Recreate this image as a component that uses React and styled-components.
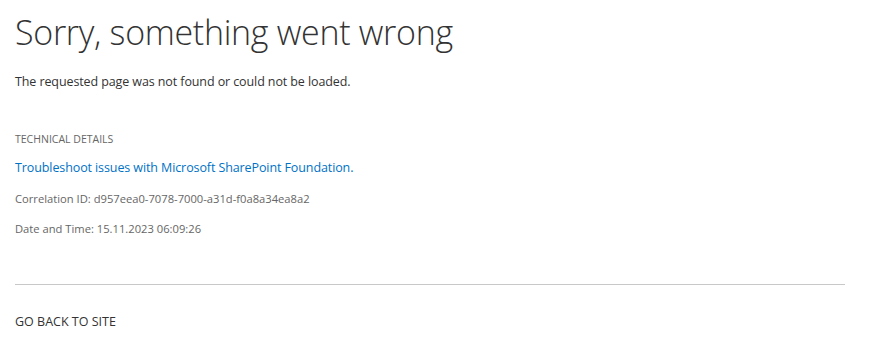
import React from "react";
import styled, { createGlobalStyle } from "styled-components";

const GlobalStyle = createGlobalStyle`
  html, body {
    margin: 0;
    padding: 0;
    background: #fff;
  }
  body {
    font-family: "Open Sans", "Noto Sans", sans-serif;
  }
`;

export default function App() {
  return (
    <>
      <GlobalStyle />
      <Page>
        <Title>Sorry, something went wrong</Title>
        <Message>The requested page was not found or could not be loaded.</Message>

        <Details>
          <SectionLabel>TECHNICAL DETAILS</SectionLabel>
          <HelpLink href="#">Troubleshoot issues with Microsoft SharePoint Foundation.</HelpLink>
          <Info>Correlation ID: d957eea0-7078-7000-a31d-f0a8a34ea8a2</Info>
          <Info>Date and Time: 15.11.2023 06:09:26</Info>
        </Details>

        <Divider />
        <BackLink href="#">GO BACK TO SITE</BackLink>
      </Page>
    </>
  );
}

const Page = styled.main`
  display: flex;
  flex-direction: column;
  align-items: flex-start;
  padding: 8px 31px 0 15px;
`;

const Title = styled.h1`
  margin: 0;
  font-family: "Open Sans", "Noto Sans", sans-serif;
  font-weight: 300;
  font-size: 34px;
  line-height: 48px;
  color: #333;
  letter-spacing: -0.3px;
`;

const Message = styled.p`
  margin: 16px 0 0;
  font-size: 12.5px;
  line-height: 20px;
  letter-spacing: -0.1px;
  color: #333;
`;

const Details = styled.section`
  display: flex;
  flex-direction: column;
  align-items: flex-start;
  margin-top: 40px;
`;

const SectionLabel = styled.div`
  font-size: 10.5px;
  line-height: 14px;
  color: #666;
`;

const HelpLink = styled.a`
  margin-top: 13px;
  font-size: 12.5px;
  line-height: 18px;
  letter-spacing: -0.1px;
  color: #0072c6;
  text-decoration: none;
`;

const Info = styled.div`
  margin-top: 12px;
  font-size: 11.2px;
  line-height: 18px;
  color: #666;

  & + & {
    margin-top: 12px;
  }

  ${HelpLink} + & {
    margin-top: 13px;
  }
`;

const Divider = styled.hr`
  align-self: stretch;
  margin: 46px 0 0;
  border: 0;
  border-top: 1px solid #c8c8c8;
`;

const BackLink = styled.a`
  margin-top: 28px;
  font-size: 12.5px;
  line-height: 18px;
  color: #333;
  text-decoration: none;
`;
